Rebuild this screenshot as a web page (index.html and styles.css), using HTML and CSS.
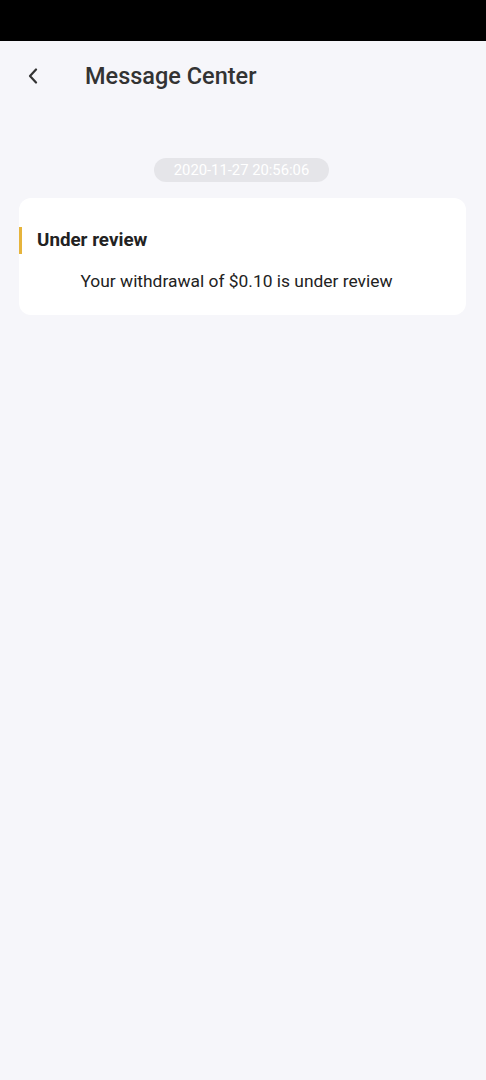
FILE: index.html
```html
<!DOCTYPE html>
<html lang="en">
<head>
    <meta charset="UTF-8">
    <meta name="viewport" content="width=device-width, initial-scale=1.0">
    <title>Message Center</title>
    <link rel="stylesheet" href="styles.css">
</head>
<body>
    <div class="status-bar"></div>
    <div class="header">
        <span class="back">
            <svg width="12" height="16" viewBox="0 0 12 16">
                <path d="M9 1.5 L3 8 L9 14.5" fill="none" stroke="#333" stroke-width="2.2" stroke-linecap="round" stroke-linejoin="round"/>
            </svg>
        </span>
        <h1>Message Center</h1>
    </div>

    <div class="list">
        <div class="time"><span>2020-11-27 20:56:06</span></div>
        <div class="card">
            <div class="card-title">Under review</div>
            <div class="card-body">Your withdrawal of $0.10 is under review</div>
        </div>
    </div>
</body>
</html>
```

FILE: styles.css
```css
body {
    margin: 0;
    font-family: Roboto, "Liberation Sans", sans-serif;
    background-color: #f6f6fa;
    height: 100vh;
    overflow: hidden;
}

.status-bar {
    height: 41px;
    background-color: #000;
}

.header {
    display: flex;
    align-items: center;
    height: 70px;
}

.back {
    display: flex;
    width: 12px;
    margin-left: 27px;
    margin-right: 46px;
}

h1 {
    margin: 0;
    font-size: 23.5px;
    font-weight: 500;
    color: #333;
}

.list {
    padding: 47px 20px 0 19px;
}

.time {
    display: flex;
    justify-content: center;
    margin-bottom: 16px;
}

.time span {
    background-color: #e5e5e9;
    color: #fff;
    font-size: 14.8px;
    line-height: 24px;
    padding: 0 20px;
    border-radius: 12px;
    margin-left: -2px;
}

.card {
    background-color: #fff;
    border-radius: 12px;
    padding: 29px 0 24px 0;
}

.card-title {
    border-left: 3px solid #e6b43c;
    padding-left: 15px;
    font-size: 18.8px;
    font-weight: bold;
    color: #222;
    line-height: 27px;
}

.card-body {
    text-align: center;
    font-size: 17.4px;
    color: #222;
    margin-top: 17px;
    padding-right: 12px;
}
```
